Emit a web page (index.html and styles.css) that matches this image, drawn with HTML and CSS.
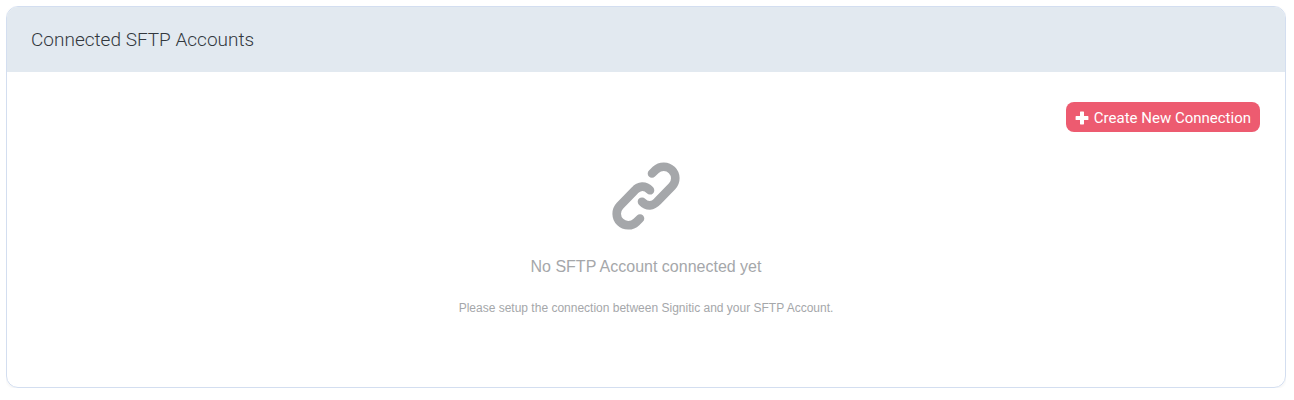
FILE: index.html
```html
<!DOCTYPE html>
<html lang="en">
<head>
    <meta charset="UTF-8">
    <meta name="viewport" content="width=device-width, initial-scale=1.0">
    <title>Connected SFTP Accounts</title>
    <link rel="stylesheet" href="styles.css">
</head>
<body>
    <section class="card">
        <header class="card-header">
            <h1>Connected SFTP Accounts</h1>
        </header>
        <div class="card-body">
            <div class="actions">
                <button type="button" class="btn-create">
                    <svg width="14" height="14" viewBox="0 0 14 14" aria-hidden="true">
                        <path d="M5.6 .6h2.8q.6 0 .6.6V5h3.8q.6 0 .6.6v2.8q0 .6-.6.6H9v3.8q0 .6-.6.6H5.6q-.6 0-.6-.6V9H1.2q-.6 0-.6-.6V5.6q0-.6.6-.6H5V1.2q0-.6.6-.6z" fill="currentColor"/>
                    </svg>
                    Create New Connection
                </button>
            </div>
            <div class="empty-state">
                <svg class="link-icon" width="70" height="70" viewBox="0 0 70 70" aria-hidden="true">
                    <g fill="none" stroke="currentColor" stroke-width="8.6" stroke-linecap="round">
                        <path d="M41 12.5L44.7 8.9A11.6 11.6 0 0 1 61.1 25.3L46.3 40.5C42 45.3 36 46 31 40.7"/>
                        <path d="M29 57.5L25.3 61.1A11.6 11.6 0 0 1 8.9 44.7L23.7 29.5C28 24.7 34 24 39 29.3"/>
                    </g>
                </svg>
                <h2>No SFTP Account connected yet</h2>
                <p>Please setup the connection between Signitic and your SFTP Account.</p>
            </div>
        </div>
    </section>
</body>
</html>
```
FILE: styles.css
```css
body {
    margin: 6px 8px 12px 6px;
    background-color: #fff;
    font-family: Roboto, sans-serif;
}
.card {
    border: 1px solid #d3def0;
    border-radius: 12px;
    overflow: hidden;
    box-shadow: 0 1px 3px rgba(0,0,0,0.06);
}
.card-header {
    background-color: #e2e9f0;
    padding: 20px 24px;
}
.card-header h1 {
    margin: 0;
    font-size: 19px;
    font-weight: 300;
    line-height: 25px;
    color: #32383e;
}
.card-body {
    padding: 30px 25px 70px;
}
.actions {
    display: flex;
    justify-content: flex-end;
}
.btn-create {
    display: flex;
    align-items: center;
    gap: 5px;
    padding: 2px 9px 0;
    border: none;
    border-radius: 8px;
    background-color: #ed5b70;
    color: #fff;
    font-family: inherit;
    font-size: 15px;
    line-height: 28px;
    cursor: pointer;
}
.btn-create:hover {
    background-color: #e0485e;
}
.empty-state {
    display: flex;
    flex-direction: column;
    align-items: center;
    padding-top: 29px;
    font-family: "Liberation Sans", Arial, sans-serif;
    color: #a5a7aa;
    text-align: center;
}
.empty-state h2 {
    margin: 24px 0 20px;
    font-size: 16px;
    font-weight: 400;
    line-height: 24px;
}
.empty-state p {
    margin: 0;
    font-size: 12px;
    line-height: 18px;
}
```
